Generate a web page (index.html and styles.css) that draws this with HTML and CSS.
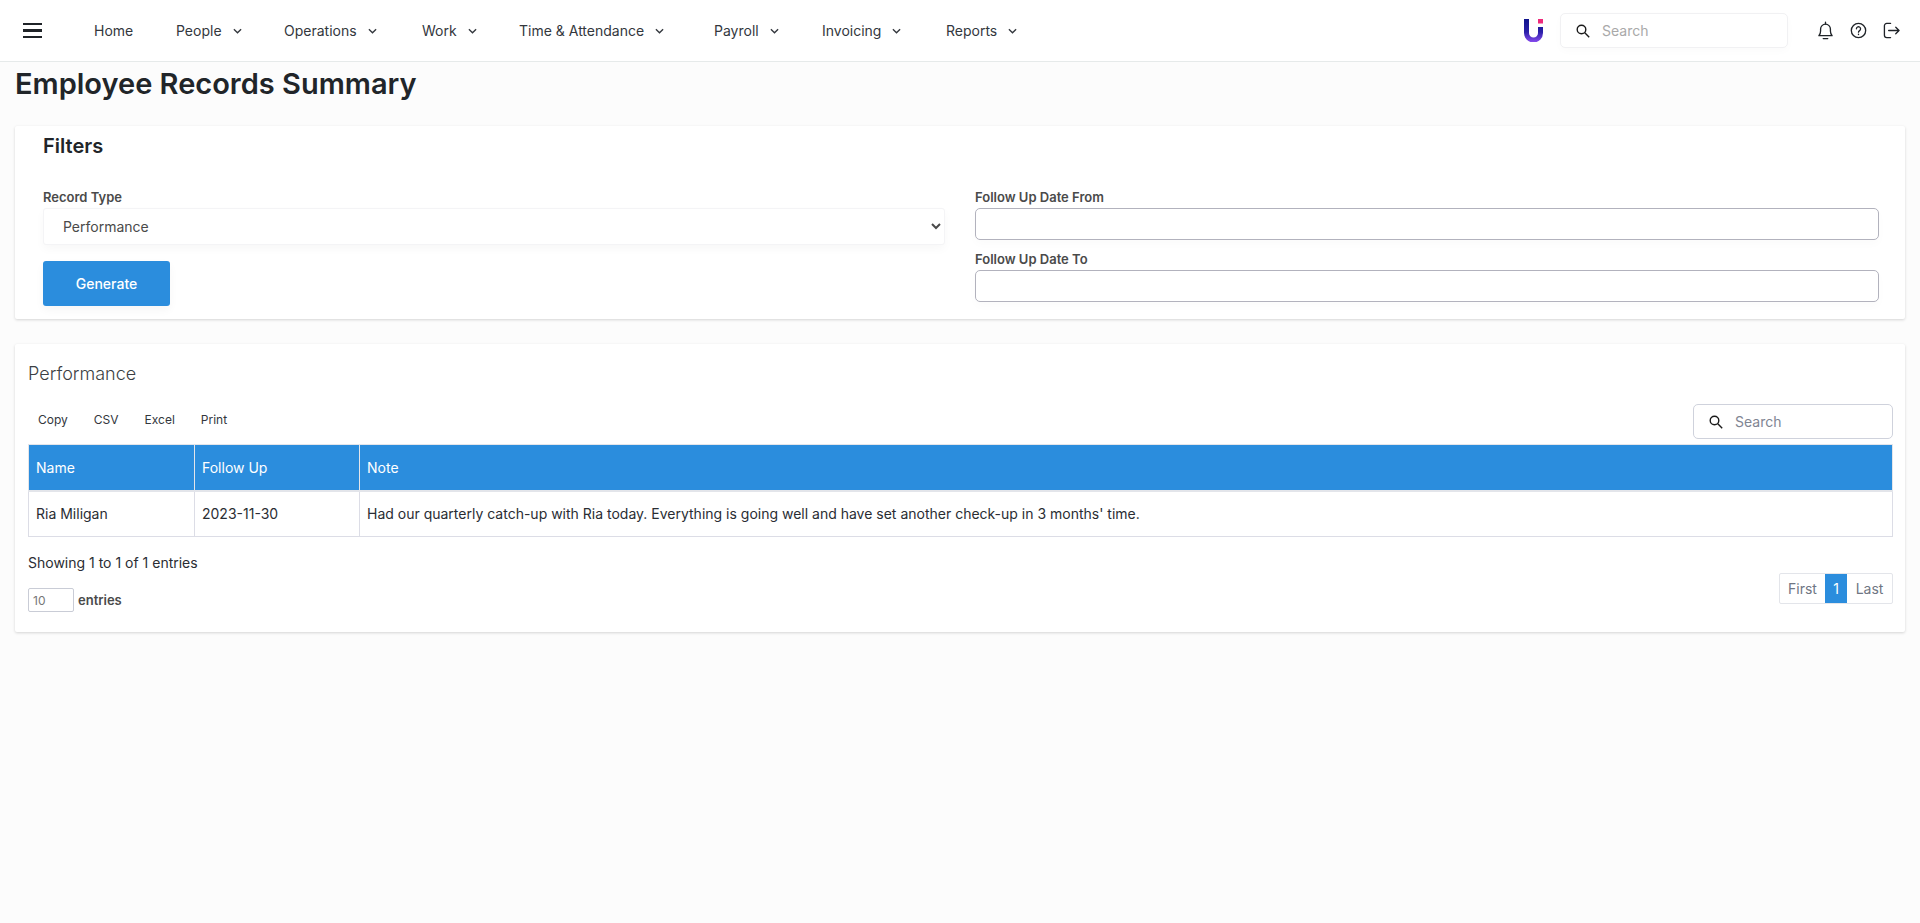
FILE: index.html

```html
<!DOCTYPE html>
<html lang="en">
<head>
    <meta charset="UTF-8">
    <meta name="viewport" content="width=device-width, initial-scale=1.0">
    <title>Employee Records Summary</title>
    <link rel="stylesheet" href="styles.css">
</head>
<body>
    <header class="topbar">
        <button class="menu-toggle" aria-label="Toggle menu">
            <span class="bar"></span>
            <span class="bar"></span>
            <span class="bar"></span>
        </button>
        <nav class="main-nav">
            <ul>
                <li class="nav-home"><a href="#">Home</a></li>
                <li class="nav-people"><a href="#">People <svg class="chevron" viewBox="0 0 10 6"><path d="M1 1l4 4 4-4"/></svg></a></li>
                <li class="nav-ops"><a href="#">Operations <svg class="chevron" viewBox="0 0 10 6"><path d="M1 1l4 4 4-4"/></svg></a></li>
                <li class="nav-work"><a href="#">Work <svg class="chevron" viewBox="0 0 10 6"><path d="M1 1l4 4 4-4"/></svg></a></li>
                <li class="nav-time"><a href="#">Time &amp; Attendance <svg class="chevron" viewBox="0 0 10 6"><path d="M1 1l4 4 4-4"/></svg></a></li>
                <li class="nav-payroll"><a href="#">Payroll <svg class="chevron" viewBox="0 0 10 6"><path d="M1 1l4 4 4-4"/></svg></a></li>
                <li class="nav-invoicing"><a href="#">Invoicing <svg class="chevron" viewBox="0 0 10 6"><path d="M1 1l4 4 4-4"/></svg></a></li>
                <li class="nav-reports"><a href="#">Reports <svg class="chevron" viewBox="0 0 10 6"><path d="M1 1l4 4 4-4"/></svg></a></li>
            </ul>
        </nav>
        <div class="topbar-right">
            <svg class="logo" viewBox="0 0 19 23" aria-label="Logo">
                <defs>
                    <linearGradient id="logo-grad" x1="0" y1="0" x2="0" y2="1">
                        <stop offset="0" stop-color="#10148c"/>
                        <stop offset="0.55" stop-color="#2a1fa8"/>
                        <stop offset="1" stop-color="#8a4cf0"/>
                    </linearGradient>
                </defs>
                <path d="M0 0h5v14a4.5 4.5 0 0 0 9 0V8h5v6a9.5 9.5 0 0 1-19 0z" fill="url(#logo-grad)"/>
                <rect x="14" y="0" width="5" height="4.5" fill="#ee2a7b"/>
            </svg>
            <label class="top-search">
                <svg class="search-icon" viewBox="0 0 14 14"><circle cx="5.5" cy="5.5" r="4.3"/><path d="M8.8 8.8l4.4 4.4"/></svg>
                <input type="text" placeholder="Search">
            </label>
            <div class="top-icons">
                <svg class="bell" viewBox="0 0 18 20"><path d="M2 15.5c1.2-1.3 1.8-2.6 1.8-5V8.5a5.2 5.2 0 0 1 10.4 0v2c0 2.4.6 3.7 1.8 5z"/><path d="M9 3.2V1.2M6.6 18.6h4.8"/></svg>
                <svg class="help" viewBox="0 0 18 18"><circle cx="9" cy="9" r="7.6"/><path d="M6.8 7.2a2.2 2.2 0 1 1 3.4 1.9c-.8.5-1.2.9-1.2 1.7"/><path d="M9 12.8v.4"/></svg>
                <svg class="logout" viewBox="0 0 18 18"><path d="M8 1.5H4A2.5 2.5 0 0 0 1.5 4v10A2.5 2.5 0 0 0 4 16.5h4"/><path d="M6 9h11M13.5 5.5L17 9l-3.5 3.5"/></svg>
            </div>
        </div>
    </header>

    <main class="content">
        <h1 class="page-title">Employee Records Summary</h1>

        <section class="card filters">
            <h2>Filters</h2>
            <div class="filter-grid">
                <div class="filter-col">
                    <label class="field-label" for="record-type">Record Type</label>
                    <select id="record-type" class="record-select">
                        <option>Performance</option>
                    </select>
                    <button class="btn-generate">Generate</button>
                </div>
                <div class="filter-col">
                    <label class="field-label" for="date-from">Follow Up Date From</label>
                    <input id="date-from" class="date-input" type="text">
                    <label class="field-label second" for="date-to">Follow Up Date To</label>
                    <input id="date-to" class="date-input" type="text">
                </div>
            </div>
        </section>

        <section class="card results">
            <h3>Performance</h3>
            <div class="table-tools">
                <div class="export-buttons">
                    <a href="#">Copy</a>
                    <a href="#">CSV</a>
                    <a href="#">Excel</a>
                    <a href="#">Print</a>
                </div>
                <label class="table-search">
                    <svg class="search-icon" viewBox="0 0 14 14"><circle cx="5.5" cy="5.5" r="4.3"/><path d="M8.8 8.8l4.4 4.4"/></svg>
                    <input type="text" placeholder="Search">
                </label>
            </div>
            <table class="records">
                <thead>
                    <tr>
                        <th class="col-name">Name</th>
                        <th class="col-follow">Follow Up</th>
                        <th>Note</th>
                    </tr>
                </thead>
                <tbody>
                    <tr>
                        <td>Ria Miligan</td>
                        <td>2023-11-30</td>
                        <td>Had our quarterly catch-up with Ria today. Everything is going well and have set another check-up in 3 months' time.</td>
                    </tr>
                </tbody>
            </table>
            <div class="table-footer">
                <div>
                    <p class="table-info">Showing 1 to 1 of 1 entries</p>
                    <div class="page-length">
                        <input type="text" value="10">
                        <span>entries</span>
                    </div>
                </div>
                <div class="pagination">
                    <a href="#">First</a>
                    <a href="#" class="active">1</a>
                    <a href="#">Last</a>
                </div>
            </div>
        </section>
    </main>
</body>
</html>
```

FILE: styles.css

```css
:root {
    --primary-color: #2b8ddd;
    --background-color: #fcfcfc;
    --text-color: #212529;
    --label-color: #4a4a4a;
    --border-color: #dcdde6;
}

* {
    box-sizing: border-box;
}

body {
    font-family: 'Inter', 'Liberation Sans', sans-serif;
    background-color: var(--background-color);
    color: var(--text-color);
    margin: 0;
    padding: 0;
    min-height: 100vh;
}

/* Top bar */
.topbar {
    height: 62px;
    background-color: #FFFFFF;
    border-bottom: 1px solid #e6eaea;
    display: flex;
    align-items: center;
    padding-left: 23px;
}

.menu-toggle {
    width: 19px;
    padding: 0;
    border: none;
    background: none;
    display: flex;
    flex-direction: column;
    gap: 4px;
    margin-right: 52px;
}

.bar {
    height: 2.5px;
    background-color: #1f2328;
    display: block;
}

.main-nav ul {
    list-style: none;
    margin: 0;
    padding: 0;
    display: flex;
}

.main-nav a {
    color: #33373d;
    text-decoration: none;
    font-size: 14px;
    display: flex;
    align-items: center;
    gap: 11px;
}

.nav-home { width: 82px; }
.nav-people { width: 108px; }
.nav-ops { width: 138px; }
.nav-work { width: 97px; }
.nav-time { width: 195px; }
.nav-payroll { width: 108px; }
.nav-invoicing { width: 124px; }

.chevron {
    width: 9px;
    height: 6px;
    fill: none;
    stroke: #33373d;
    stroke-width: 1.5;
}

.topbar-right {
    margin-left: auto;
    display: flex;
    align-items: center;
}

.logo {
    width: 19px;
    height: 23px;
    margin-right: 17px;
}

.search-icon {
    width: 14px;
    height: 14px;
    fill: none;
    stroke: #1a1a1a;
    stroke-width: 1.4;
    flex-shrink: 0;
}

.top-search {
    width: 228px;
    height: 35px;
    border: 1px solid #f1f1f3;
    border-radius: 5px;
    box-shadow: 0 3px 8px rgba(0, 0, 0, 0.02);
    display: flex;
    align-items: center;
    padding-left: 15px;
    gap: 12px;
}

.top-search input,
.table-search input {
    border: none;
    outline: none;
    background: none;
    font: inherit;
    font-size: 14px;
    width: 120px;
    padding: 0;
}

.top-search input::placeholder {
    color: #a9a9a9;
}

.table-search input::placeholder {
    color: #7f8593;
}

.top-icons {
    display: flex;
    align-items: center;
    margin-left: 29px;
    margin-right: 20px;
    gap: 16px;
}

.top-icons svg {
    fill: none;
    stroke: #1f2328;
    stroke-width: 1.4;
    stroke-linecap: round;
    stroke-linejoin: round;
}

.bell { width: 17px; height: 19px; }
.help { width: 17px; height: 17px; }
.logout { width: 17px; height: 17px; }

/* Page */
.content {
    padding: 0 15px;
}

.page-title {
    font-size: 29px;
    font-weight: 600;
    line-height: 42px;
    margin: 1px 0 21px;
}

.card {
    background-color: #FFFFFF;
    box-shadow: 0 1px 3px rgba(0, 0, 0, 0.16);
    border-radius: 2px;
}

.filters {
    height: 193px;
    padding: 0 26px 0 28px;
    margin-bottom: 25px;
}

.filters h2 {
    font-size: 20px;
    font-weight: 600;
    line-height: 40px;
    margin: 0 0 20px;
}

.filter-grid {
    display: grid;
    grid-template-columns: 902px 904px;
    column-gap: 30px;
}

.field-label {
    display: block;
    font-size: 13px;
    font-weight: 600;
    color: var(--label-color);
    line-height: 22px;
}

.field-label.second {
    margin-top: 8px;
}

.record-select {
    display: block;
    width: 100%;
    height: 37px;
    border: 1px solid #f4f4f6;
    border-radius: 3px;
    background-color: #FFFFFF;
    box-shadow: 0 4px 10px rgba(0, 0, 0, 0.03);
    color: var(--label-color);
    font: inherit;
    font-size: 14px;
    padding-left: 15px;
}

.btn-generate {
    display: block;
    width: 127px;
    height: 45px;
    margin-top: 16px;
    border: none;
    border-radius: 3px;
    background-color: var(--primary-color);
    color: #FFFFFF;
    font: inherit;
    font-size: 14px;
    font-weight: 500;
    box-shadow: 0 4px 10px rgba(0, 0, 0, 0.04);
}

.date-input {
    display: block;
    width: 100%;
    height: 32px;
    border: 1px solid #b2b2bd;
    border-radius: 5px;
    background-color: #FFFFFF;
    box-shadow: 0 4px 10px rgba(0, 0, 0, 0.02);
}

.results {
    height: 288px;
    padding: 0 12px 0 13px;
}

.results h3 {
    font-size: 18px;
    font-weight: 300;
    line-height: 26px;
    color: #3c3f44;
    margin: 0;
    padding-top: 17px;
    height: 60px;
}

.table-tools {
    display: flex;
    justify-content: space-between;
    align-items: flex-start;
    height: 40px;
}

.export-buttons {
    display: flex;
    padding-left: 10px;
    gap: 26px;
    padding-top: 8px;
}

.export-buttons a {
    color: #33373d;
    font-size: 12px;
    line-height: 16px;
    text-decoration: none;
}

.table-search {
    width: 200px;
    height: 35px;
    border: 1px solid #cfd2dc;
    border-radius: 5px;
    display: flex;
    align-items: center;
    padding-left: 15px;
    gap: 12px;
}

.records {
    width: 100%;
    border-collapse: collapse;
    table-layout: fixed;
    font-size: 14px;
}

.records th,
.records td {
    border: 1px solid var(--border-color);
    padding: 0 7px;
    text-align: left;
}

.records th {
    background-color: var(--primary-color);
    color: #FFFFFF;
    font-weight: 400;
    height: 46px;
    border-bottom-width: 2px;
    border-color: #e3e5ea;
}

.records td {
    height: 46px;
    color: #2a2d33;
}

.col-name { width: 166px; }
.col-follow { width: 165px; }

.table-footer {
    display: flex;
    justify-content: space-between;
    align-items: flex-start;
}

.table-info {
    font-size: 14px;
    line-height: 20px;
    margin: 16px 0 0;
    color: #2a2d33;
}

.page-length {
    display: flex;
    align-items: center;
    gap: 4px;
    margin-top: 15px;
    font-size: 13px;
    font-weight: 600;
    color: var(--label-color);
}

.page-length input {
    width: 46px;
    height: 24px;
    border: 1px solid #c9ccd6;
    border-radius: 2px;
    padding: 0 4px;
    color: #777;
    font: inherit;
    font-size: 12px;
    font-weight: 400;
}

.pagination {
    display: flex;
    margin-top: 36px;
    height: 31px;
    border: 1px solid #e3e5ea;
    border-radius: 2px;
}

.pagination a {
    display: flex;
    align-items: center;
    justify-content: center;
    color: #6f7683;
    font-size: 14px;
    text-decoration: none;
    width: 45px;
}

.pagination a.active {
    width: 22px;
    background-color: var(--primary-color);
    color: #FFFFFF;
}
```
